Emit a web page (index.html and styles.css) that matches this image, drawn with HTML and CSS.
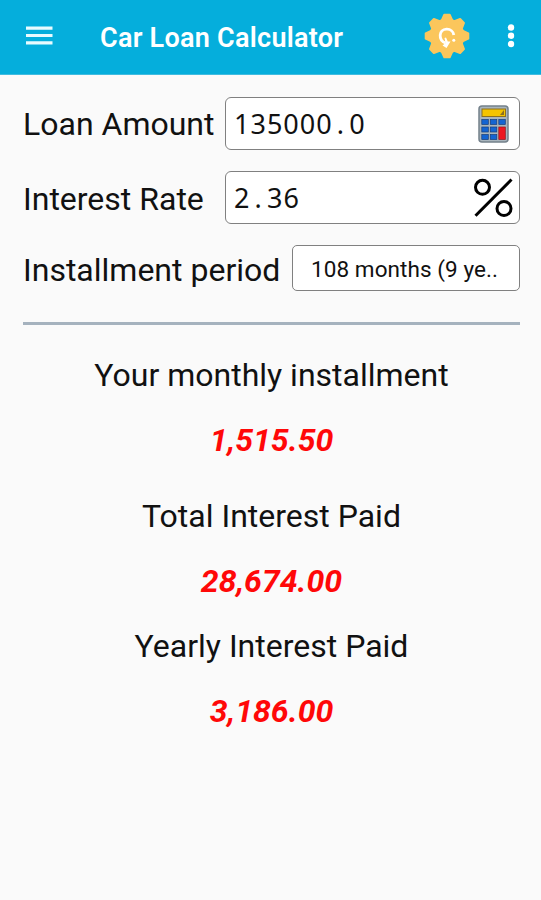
FILE: index.html
```
<!DOCTYPE html>
<html lang="en">
<head>
    <meta charset="UTF-8">
    <meta name="viewport" content="width=device-width, initial-scale=1.0">
    <title>Car Loan Calculator</title>
    <link rel="stylesheet" href="styles.css">
</head>
<body>
    <header class="app-bar">
        <svg class="menu-icon" width="28" height="20" viewBox="0 0 28 20">
            <path d="M1 2.2H27.500M1 9.500H27.500M1 16.800H27.500" stroke="#e9fbff" stroke-width="3.200"/>
        </svg>
        <h1>Car Loan Calculator</h1>
        <svg class="gear-icon" width="46" height="46" viewBox="-23 -23 46 46">
            <circle r="17.500" fill="#fbc65c"/>
            <g fill="#fbc65c" stroke="#fbc65c" stroke-width="2" stroke-linejoin="round">
                <path id="tooth" d="M-5.500 -15L-2.700 -21.300H2.700L5.500 -15Z"/>
                <use href="#tooth" transform="rotate(45)"/>
                <use href="#tooth" transform="rotate(90)"/>
                <use href="#tooth" transform="rotate(135)"/>
                <use href="#tooth" transform="rotate(180)"/>
                <use href="#tooth" transform="rotate(225)"/>
                <use href="#tooth" transform="rotate(270)"/>
                <use href="#tooth" transform="rotate(315)"/>
            </g>
            <path d="M-1.500 7C-9 4 -8.500 -6.500 -0.500 -6.800C3.500 -7 6.300 -4.500 6.800 -1" fill="none" stroke="#fff" stroke-width="2.800"/>
            <path d="M-4.500 9.500L-0.500 12L3.500 5.500L0.800 5.500L-1 1.500L-2.500 2L-1.500 7Z" fill="#fff"/>
            <circle cx="6.800" cy="4.300" r="1.500" fill="#fff"/>
        </svg>
        <svg class="more-icon" width="8" height="26" viewBox="0 0 8 26">
            <g fill="#fff">
                <circle cx="4" cy="4.500" r="3.200"/>
                <circle cx="4" cy="12.700" r="3.200"/>
                <circle cx="4" cy="21" r="3.200"/>
            </g>
        </svg>
    </header>
    <main>
        <div class="row">
            <label>Loan Amount</label>
            <div class="field">
                <span class="digits">135000<span class="point">.</span>0</span>
                <svg class="calc-icon" width="31" height="38" viewBox="0 0 31 38">
                    <rect x="1" y="1" width="29" height="36" rx="3" fill="#a9b5bd" stroke="#74818b" stroke-width="1.500"/>
                    <rect x="4" y="4" width="23.500" height="7.500" fill="#f5c400" stroke="#8b7020"/>
                    <path d="M22 10l4-5v5z" fill="#8b7020"/>
                    <g fill="#1464d2" stroke="#173c77" stroke-width=".7">
                        <rect x="3.800" y="14.500" width="6.500" height="5"/>
                        <rect x="12.300" y="14.500" width="6.500" height="5"/>
                        <rect x="20.800" y="14.500" width="6.500" height="5"/>
                        <rect x="3.800" y="22" width="6.500" height="5"/>
                        <rect x="12.300" y="22" width="6.500" height="5"/>
                        <rect x="3.800" y="29.500" width="6.500" height="5"/>
                        <rect x="12.300" y="29.500" width="6.500" height="5"/>
                    </g>
                    <rect x="20.800" y="22" width="6.500" height="12.500" fill="#ed1720" stroke="#8d1820" stroke-width=".7"/>
                </svg>
            </div>
        </div>
        <div class="row">
            <label class="rate-label">Interest Rate</label>
            <div class="field">
                <span class="digits">2<span class="point">.</span>36</span>
                <svg class="percent-icon" width="40" height="40" viewBox="0 0 40 40">
                    <g fill="none" stroke="#000" stroke-width="3">
                        <path d="M2.500 37.800L38.500 1.500"/>
                        <circle cx="9.500" cy="9.300" r="7"/>
                        <circle cx="31" cy="30.500" r="7"/>
                    </g>
                </svg>
            </div>
        </div>
        <div class="row period-row">
            <label class="period-label">Installment period</label>
            <div class="select">108 months (9 ye..</div>
        </div>
        <hr>
        <section class="results">
            <h2>Your monthly installment</h2>
            <p class="value">1,515.50</p>
            <h2>Total Interest Paid</h2>
            <p class="value total">28,674.00</p>
            <h2>Yearly Interest Paid</h2>
            <p class="value">3,186.00</p>
        </section>
    </main>
</body>
</html>
```
FILE: styles.css
```
* {
    box-sizing: border-box;
}
body {
    margin: 0;
    min-height: 900px;
    background-color: #fafafa;
    color: #111;
    font-family: Roboto, "Liberation Sans", sans-serif;
}
.app-bar {
    display: flex;
    align-items: center;
    height: 75px;
    padding: 0 26px 2px 25px;
    background-color: #05aedc;
    border-bottom: 1px solid #40bce0;
}
h1 {
    flex: 1;
    margin: 0 0 0 47px;
    font-size: 27px;
    font-weight: 600;
    line-height: 40px;
    padding-top: 4px;
    letter-spacing: 0.26px;
    color: #fff;
    white-space: nowrap;
}
.gear-icon {
    margin-right: 37px;
}
main {
    padding: 22px 21px 0 23px;
}
.row {
    display: flex;
    align-items: center;
    justify-content: space-between;
    height: 53px;
    margin-bottom: 21px;
}
label {
    font-size: 32px;
    line-height: 40px;
    white-space: nowrap;
}
.rate-label {
    padding-top: 2px;
}
.period-label {
    padding-top: 3px;
}
.field {
    display: flex;
    align-items: center;
    justify-content: space-between;
    width: 295px;
    height: 53px;
    padding: 0 6px 0 8px;
    background-color: #fff;
    border: 1.5px solid #808080;
    border-radius: 6px;
}
.digits {
    font-family: "Noto Sans", sans-serif;
    font-size: 27px;
    letter-spacing: 1px;
}
/* the point takes a full digit width */
.point {
    display: inline-block;
    width: 16.5px;
    text-align: center;
}
.calc-icon {
    margin-right: 4px;
}
.period-row {
    height: 46px;
    margin-bottom: 31px;
}
.select {
    width: 228px;
    height: 46px;
    padding: 1px 0 0 18px;
    background-color: #fff;
    border: 1.5px solid #808080;
    border-radius: 5px;
    font-size: 22.5px;
    line-height: 44px;
    letter-spacing: 0.08px;
    white-space: nowrap;
}
hr {
    height: 3px;
    margin: 0;
    border: none;
    background-color: #a5b2be;
}
.results {
    padding-top: 30px;
    text-align: center;
}
h2 {
    margin: 0;
    font-size: 32px;
    font-weight: 400;
    line-height: 40px;
}
.value {
    margin: 25px 0 36px;
    font-size: 32px;
    font-style: italic;
    font-weight: 700;
    line-height: 40px;
    color: #ff0808;
}
.total {
    margin-bottom: 25px;
}
```
